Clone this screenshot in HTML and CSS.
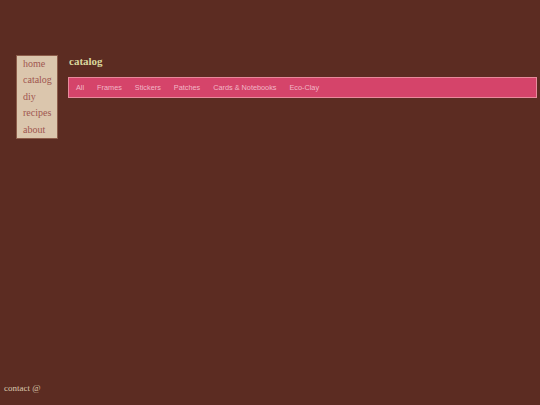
FILE: index.html
```html
<!DOCTYPE html>
<html>
<head>
<meta charset="utf-8">
<link rel="stylesheet" href="styles.css">
</head>
<body>
<div class="page">
  <nav class="side">
    <a>home</a>
    <a>catalog</a>
    <a>diy</a>
    <a>recipes</a>
    <a>about</a>
  </nav>
  <main class="main">
    <h1 class="title">catalog</h1>
    <div class="tabs">
      <span>All</span>
      <span>Frames</span>
      <span>Stickers</span>
      <span>Patches</span>
      <span>Cards &amp; Notebooks</span>
      <span>Eco-Clay</span>
    </div>
  </main>
</div>
<footer class="foot">contact @</footer>
</body>
</html>
```
FILE: styles.css
```css
html, body {
  margin: 0;
  padding: 0;
  background: #5c2c22;
  height: 100%;
}
body {
  font-family: "Liberation Serif", serif;
  position: relative;
}
.page {
  display: flex;
  align-items: flex-start;
  padding: 55px 3px 0 16px;
}
.side {
  display: flex;
  flex-direction: column;
  background: #dbc6ad;
  border: 1px solid #8c5c4a;
  width: 34px;
  padding: 0 0 0 6px;
  box-sizing: content-box;
}
.side a {
  color: #a05650;
  font-size: 10px;
  line-height: 16.4px;
}
.main {
  flex: 1;
  margin-left: 10px;
}
.title {
  margin: 0;
  padding-left: 1px;
  font-size: 11px;
  font-weight: bold;
  color: #d9d69c;
  line-height: 12px;
}
.tabs {
  margin-top: 10px;
  background: #d5446a;
  border: 1px solid #e88a9c;
  height: 19px;
  display: flex;
  align-items: center;
  padding-left: 7px;
}
.tabs span {
  font-family: "Liberation Sans", sans-serif;
  font-size: 7.3px;
  color: #f2b7c6;
  margin-right: 13px;
}
.foot {
  position: absolute;
  left: 4px;
  bottom: 12px;
  font-size: 9px;
  color: #d9c8ae;
}
```
